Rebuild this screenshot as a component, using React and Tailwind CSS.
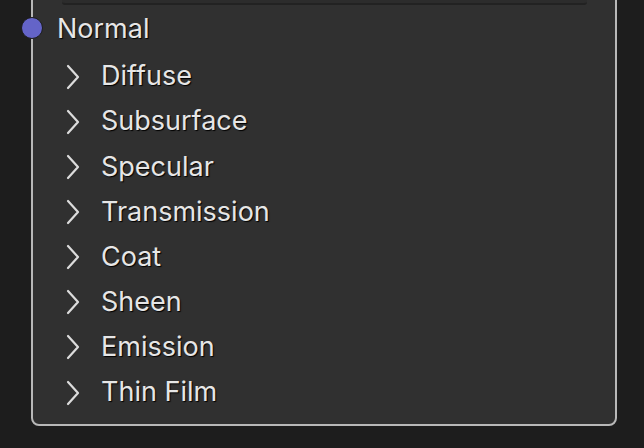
const panels = ["Diffuse", "Subsurface", "Specular", "Transmission", "Coat", "Sheen", "Emission", "Thin Film"]

const Chevron = () => (
  <svg width="14" height="26" viewBox="0 0 14 26" fill="none" className="ml-[33px] shrink-0">
    <polyline points="2,2 12,13 2,24" stroke="#dcdcdc" strokeWidth="2.2" strokeLinecap="round" strokeLinejoin="round" />
  </svg>
)

const App = () => {
  return (
    <div className="h-[448px] w-[644px] overflow-hidden bg-[#1d1d1d] font-['Inter',sans-serif] text-[27px] text-[#e6e6e6]">
      <div className="ml-[31px] mr-[27px] -mt-[10px] h-[436px] rounded-b-[8px] border-2 border-[#b8b8b8] bg-[#303030]">
        {/* field above, only its bottom edge shows */}
        <div className="ml-[29px] mr-[28px] h-[13px] rounded-b-[3px] border-b-2 border-[#222] bg-[#2c2c2c]" />

        <div className="relative flex h-[49px] items-center pl-[24px] [text-shadow:1px_1px_1px_#000]">
          <div className="absolute -left-[12px] top-[12px] h-[22px] w-[22px] rounded-full border border-[#1c1c1c] bg-[#6464c8]" />
          Normal
        </div>

        <div className="flex flex-col">
          {panels.map((name) => (
            <div key={name} className="flex h-[45.15px] items-center [text-shadow:1px_1px_1px_#000]">
              <Chevron />
              <span className="ml-[21px]">{name}</span>
            </div>
          ))}
        </div>
      </div>
    </div>
  )
}

export default App
